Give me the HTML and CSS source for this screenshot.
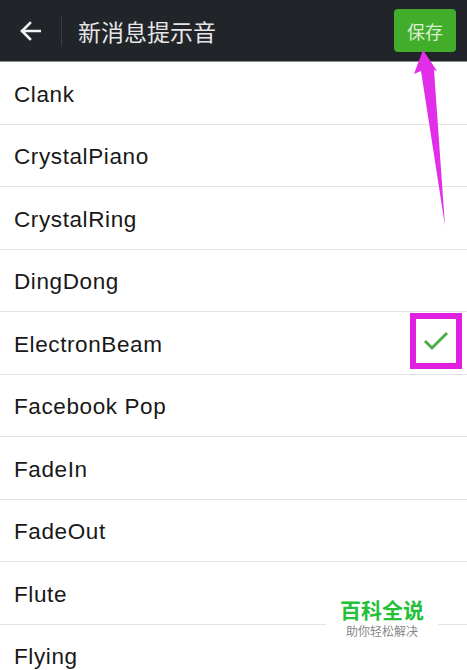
FILE: index.html
```html
<!DOCTYPE html>
<html lang="zh-CN">
<head>
  <meta charset="UTF-8">
  <meta name="viewport" content="width=device-width, initial-scale=1.0">
  <title>新消息提示音</title>
  <link rel="stylesheet" href="styles.css">
</head>
<body>
  <!-- Top Bar -->
  <header class="topbar">
    <button class="back" aria-label="返回">
      <svg width="22" height="20" viewBox="0 0 22 20">
        <path d="M11 2 L3 10 L11 18 M3 10 H21" fill="none" stroke="#f2f2f2" stroke-width="2.6" stroke-linecap="square"/>
      </svg>
    </button>
    <span class="divider"></span>
    <h1 class="title">新消息提示音</h1>
    <button class="save">保存</button>
  </header>

  <!-- Sound List -->
  <ul class="sound-list">
    <li class="sound">Clank</li>
    <li class="sound">CrystalPiano</li>
    <li class="sound">CrystalRing</li>
    <li class="sound">DingDong</li>
    <li class="sound selected">
      ElectronBeam
      <span class="check-box">
        <svg width="28" height="22" viewBox="0 0 28 22">
          <path d="M3 11 L10 18 L25 3" fill="none" stroke="#4cae45" stroke-width="3"/>
        </svg>
      </span>
    </li>
    <li class="sound">Facebook Pop</li>
    <li class="sound">FadeIn</li>
    <li class="sound">FadeOut</li>
    <li class="sound">Flute</li>
    <li class="sound">Flying</li>
  </ul>

  <!-- Annotation arrow -->
  <svg class="pointer" width="60" height="180" viewBox="0 0 60 180">
    <polygon points="23,2 14,26 21,23 45,178 34,22 37,23" fill="#e22ee8"/>
  </svg>

  <!-- Watermark -->
  <div class="watermark">
    <div class="wm-name">百科全说</div>
    <div class="wm-tag">助你轻松解决</div>
  </div>
</body>
</html>
```

FILE: styles.css
```css
/* Global */
body {
  margin: 0;
  background: #ffffff;
  font-family: "Liberation Sans", "Noto Sans CJK SC", sans-serif;
  overflow: hidden;
  position: relative;
  height: 670px;
}

/* Top Bar */
.topbar {
  display: flex;
  align-items: center;
  height: 61px;
  background: #212429;
  border-bottom: 1px solid #8a8c8e;
  padding: 0 11px 0 19px;
}

.back {
  background: none;
  border: none;
  padding: 0;
  display: flex;
  align-items: center;
}

.divider {
  width: 1px;
  height: 30px;
  background: #3a3d42;
  margin: 0 16px 0 20px;
}

.title {
  flex: 1;
  margin: 0;
  font-family: "Noto Sans CJK SC", sans-serif;
  font-weight: normal;
  font-size: 23px;
  color: #e6e6e6;
}

.save {
  width: 62px;
  height: 43px;
  border: none;
  border-radius: 4px;
  background: #41ad2a;
  color: #d8f0d0;
  font-family: "Noto Sans CJK SC", sans-serif;
  font-size: 18px;
  padding: 0;
}

/* Sound List */
.sound-list {
  list-style: none;
  margin: 0;
  padding: 0;
}

.sound {
  display: flex;
  align-items: center;
  justify-content: space-between;
  box-sizing: border-box;
  height: 62.5px;
  border-bottom: 1px solid #e2e2e2;
  padding: 4px 5px 0 14px;
  font-size: 22.5px;
  letter-spacing: 0.6px;
  color: #181818;
}

.check-box {
  align-self: flex-start;
  margin-top: -3px;
  display: flex;
  align-items: center;
  justify-content: center;
  width: 40px;
  height: 44px;
  border: 6px solid #e11fe0;
}

/* Annotation */
.pointer {
  position: absolute;
  left: 400px;
  top: 48px;
}

/* Watermark */
.watermark {
  position: absolute;
  left: 326px;
  top: 595px;
  width: 112px;
  padding: 2px 0 4px;
  background: #ffffff;
  text-align: center;
}

.wm-name {
  font-family: "Noto Sans CJK SC", sans-serif;
  font-weight: bold;
  font-size: 21px;
  line-height: 24px;
  color: #24c038;
}

.wm-tag {
  margin-top: 3px;
  font-family: "Noto Sans CJK SC", sans-serif;
  font-size: 12px;
  line-height: 14px;
  color: #888888;
}
```
